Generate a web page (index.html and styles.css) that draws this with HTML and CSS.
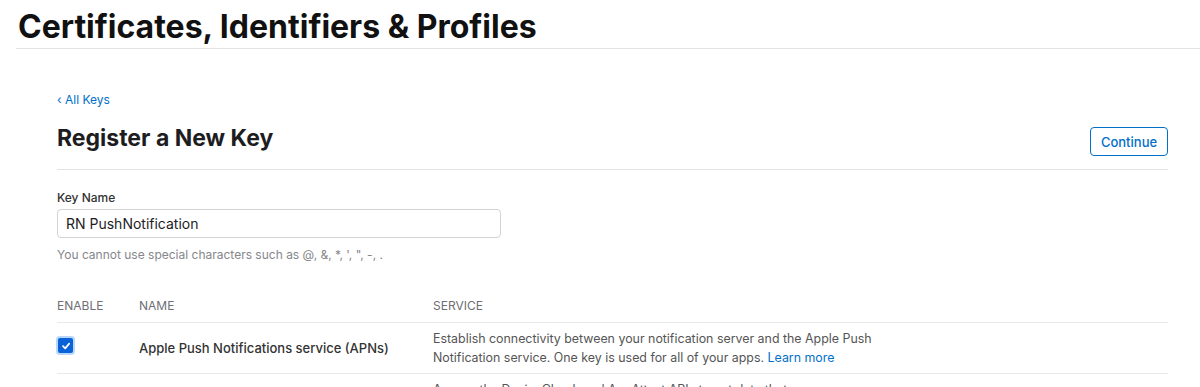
FILE: index.html
```html
<!DOCTYPE html>
<html>
<head>
<meta charset="utf-8">
<link rel="stylesheet" href="styles.css">
</head>
<body>
<header class="top">
  <h1 class="top-title">Certificates, Identifiers &amp; Profiles</h1>
</header>
<main class="main">
  <a class="back" href="#">&#8249; All Keys</a>
  <div class="head">
    <h2 class="head-title">Register a New Key</h2>
    <button class="btn">Continue</button>
  </div>
  <div class="field">
    <label class="label">Key Name</label>
    <div class="input">RN PushNotification</div>
    <div class="hint">You cannot use special characters such as @, &amp;, *, ', ", -, .</div>
  </div>
  <div class="table">
    <div class="row hdr">
      <div class="c1">ENABLE</div>
      <div class="c2">NAME</div>
      <div class="c3">SERVICE</div>
    </div>
    <div class="row item">
      <div class="c1 cbcell"><span class="cb"><svg width="10" height="10" viewBox="0 0 10 10"><path d="M2 5.2 L4.2 7.4 L8.2 2.6" fill="none" stroke="#fff" stroke-width="1.7" stroke-linecap="round" stroke-linejoin="round"/></svg></span></div>
      <div class="c2 name">Apple Push Notifications service (APNs)</div>
      <div class="c3 desc">Establish connectivity between your notification server and the Apple Push Notification service. One key is used for all of your apps. <a href="#" class="link">Learn more</a></div>
    </div>
    <div class="row item">
      <div class="c1"></div>
      <div class="c2 name"></div>
      <div class="c3 desc">Access the DeviceCheck and AppAttest APIs to get data that your associated server can use in its business logic to protect your business.</div>
    </div>
  </div>
</main>
</body>
</html>
```
FILE: styles.css
```css
* { box-sizing: border-box; }
html, body { margin: 0; padding: 0; background: #fff; }
body { font-family: Inter, "Noto Sans", sans-serif; color: #1d1d1f; overflow: hidden; height: 387px; }
.top { margin-left: 16px; border-bottom: 1px solid #e3e3e3; height: 49px; padding-left: 2px; }
.top-title { margin: 0; font-size: 32px; font-weight: 700; line-height: 1; padding-top: 11px; color: #111; }
.main { margin: 0 32px 0 57px; padding-top: 43px; }
.back { display: block; font-size: 12px; color: #0070c9; text-decoration: none; line-height: 16px; }
.head { display: flex; justify-content: space-between; align-items: flex-start; border-bottom: 1px solid #e3e3e3; margin-top: 16px; padding-bottom: 13px; }
.head-title { margin: 0; font-size: 23px; line-height: 28px; font-weight: 700; color: #1d1d1f; }
.btn { height: 29px; width: 78px; border: 1px solid #0070c9; border-radius: 4px; background: #fff; color: #0070c9; font-family: inherit; font-size: 13px; font-weight: 500; padding: 0; margin-top: 3px; }
.field { margin-top: 20px; }
.label { display: block; font-size: 12px; font-weight: 500; color: #333; line-height: 16px; }
.input { margin-top: 3px; width: 444px; height: 29px; border: 1px solid #d2d2d7; border-radius: 4px; font-size: 14px; color: #1d1d1f; padding: 0 8px; line-height: 27px; }
.hint { margin-top: 9px; font-size: 12px; color: #86868b; line-height: 16px; }
.table { margin-top: 31px; }
.row { display: flex; border-bottom: 1px solid #e8e8ed; }
.hdr { font-size: 12px; color: #6e6e73; height: 29px; align-items: flex-start; padding-top: 4px; line-height: 16px; }
.c1 { width: 82px; flex: none; }
.c2 { width: 294px; flex: none; }
.c3 { width: 450px; flex: none; }
.item { padding: 6px 0; align-items: center; min-height: 50px; }
.item + .item { align-items: flex-start; }
.cbcell { display: flex; align-items: center; }
.cb { display: flex; width: 15px; height: 15px; background: #0a62d8; border-radius: 2px; align-items: center; justify-content: center; box-shadow: 0 0 0 2px #b9d7fb; margin: 0 0 5px 1px; }
.name { font-size: 13px; font-weight: 500; color: #333; }
.desc { font-size: 12.4px; color: #555; line-height: 19px; }
.link { color: #0070c9; text-decoration: none; }
```
